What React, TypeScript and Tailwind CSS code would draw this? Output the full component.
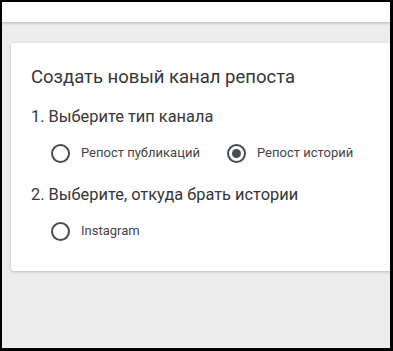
import React from 'react';

type RadioProps = {
  label: string;
  checked?: boolean;
  className?: string;
};

function Radio({ label, checked = false, className = '' }: RadioProps) {
  return (
    <label className={`flex items-center h-[24px] ${className}`}>
      <span className="flex items-center justify-center w-[19px] h-[19px] rounded-full border-2 border-[#474c51] shrink-0">
        {checked && <span className="w-[9px] h-[9px] rounded-full bg-[#474c51]" />}
      </span>
      <span className="ml-[11px] text-[13px] leading-[24px] text-[#454545]">{label}</span>
    </label>
  );
}

export default function App() {
  return (
    <div
      className="w-[393px] h-[351px] bg-black pl-[2px] pt-[2px] pr-[3px] pb-[3px] overflow-hidden"
      style={{ fontFamily: 'Roboto, "Liberation Sans", sans-serif' }}
    >
      <div className="flex flex-col h-full bg-[#eeedee] overflow-hidden">
        {/* Top bar */}
        <div className="h-[21px] shrink-0 bg-white border-b border-[#c9c9c9] shadow-[0_1px_2px_rgba(0,0,0,0.12)]" />

        {/* Card */}
        <div className="pl-[9px] pt-[20px]">
          <div className="w-[420px] h-[228px] bg-white rounded-[3px] shadow-[0_1px_3px_rgba(0,0,0,0.22)] px-[20px] pt-[22px]">
            <h2 className="text-[18.5px] leading-[24px] text-[#363636]">Создать новый канал репоста</h2>

            <p className="mt-[16px] text-[16.4px] leading-[24px] text-[#363636]">1. Выберите тип канала</p>
            <div className="mt-[12px] ml-[20px] flex">
              <Radio label="Репост публикаций" className="w-[176px]" />
              <Radio label="Репост историй" checked />
            </div>

            <p className="mt-[18px] text-[16.4px] leading-[24px] text-[#363636]">2. Выберите, откуда брать истории</p>
            <div className="mt-[12px] ml-[20px] flex">
              <Radio label="Instagram" />
            </div>
          </div>
        </div>
      </div>
    </div>
  );
}
